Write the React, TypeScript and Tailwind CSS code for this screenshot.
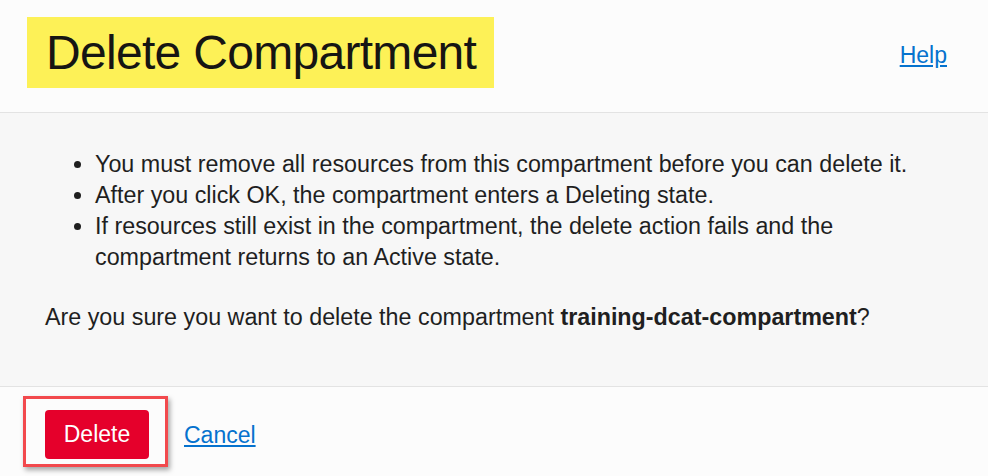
export default function App() {
  return (
    <div className="w-[988px] h-[476px] flex flex-col bg-[#fcfcfc] text-[#161513] font-['Liberation_Sans',Arial,sans-serif]">
      <header className="h-[113px] flex items-start justify-between pl-[27px] pr-[41px] pt-[17px] border-b border-[#e3e3e3]">
        <div className="bg-[#fdf157] h-[71px] w-[467px] flex items-center pl-[19px]">
          <h1 className="text-[48px] leading-none font-normal tracking-[-0.7px]">Delete Compartment</h1>
        </div>
        <a href="#" className="mt-[21px] text-[23px] text-[#0572ce] underline underline-offset-2">Help</a>
      </header>
      <main className="h-[274px] bg-[#f7f7f7] border-b border-[#e3e3e3] pl-[45px] pt-[36px] text-[23.3px] leading-[31px] text-[#1f1f1f]">
        <ul className="list-disc pl-[50px]">
          <li>You must remove all resources from this compartment before you can delete it.</li>
          <li>After you click OK, the compartment enters a Deleting state.</li>
          <li>If resources still exist in the compartment, the delete action fails and the<br />compartment returns to an Active state.</li>
        </ul>
        <p className="mt-[29px]">
          Are you sure you want to delete the compartment <b>training-dcat-compartment</b>?
        </p>
      </main>
      <footer className="flex-1 flex items-center pl-[23px] gap-[16px]">
        <div className="border-[3px] border-[#f2494d] shadow-[2px_3px_5px_rgba(0,0,0,0.35)] pl-[19px] pr-[16px] pt-[11px] pb-[5px]">
          <button className="bg-[#e5002b] text-white text-[23px] rounded-[4px] w-[104px] h-[49px]">Delete</button>
        </div>
        <a href="#" className="mt-[7px] text-[23px] text-[#0572ce] underline underline-offset-2">Cancel</a>
      </footer>
    </div>
  );
}
